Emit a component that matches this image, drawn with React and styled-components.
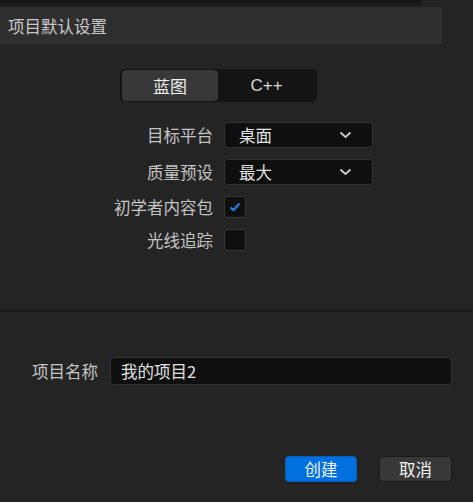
import React, { useState } from 'react';
import styled, { createGlobalStyle } from 'styled-components';

const GlobalStyle = createGlobalStyle`
  html, body {
    margin: 0;
    padding: 0;
    background: #242424;
    font-family: "Noto Sans CJK SC", "Noto Sans", sans-serif;
  }
`;

const Page = styled.div`
  width: 473px;
  height: 502px;
  display: flex;
  flex-direction: column;
  background: #242424;
  color: #c4c4c4;
  font-size: 16.5px;
  overflow: hidden;
`;

const TopShade = styled.div`
  width: 421px;
  height: 7px;
  background: linear-gradient(#141414, #1f1f1f);
`;

const TitleBar = styled.div`
  width: 442px;
  height: 37px;
  background: #2f2f2f;
  display: flex;
  align-items: center;
  padding-left: 8px;
  box-sizing: border-box;
  color: #c8c8c8;
`;

const Settings = styled.div`
  display: grid;
  grid-template-columns: 213px 149px;
  column-gap: 11px;
  row-gap: 11px;
  align-items: center;
  padding-top: 25px;
  height: 266px;
  align-content: start;
  box-sizing: border-box;
`;

const ToggleWrap = styled.div`
  grid-column: 1 / span 2;
  margin-left: 120px;
  margin-bottom: 9px;
  width: 197px;
  height: 33px;
  display: flex;
  padding: 1px 2px;
  box-sizing: border-box;
  background: #141414;
  border-radius: 5px;
`;

const ToggleItem = styled.div`
  display: flex;
  align-items: center;
  justify-content: center;
  border-radius: 4px;
  background: ${p => (p.active ? '#383838' : 'transparent')};
  color: ${p => (p.active ? '#f0f0f0' : '#d8d8d8')};
  font-size: 17px;
  font-family: ${p => (p.latin ? '"Liberation Sans", Arial, sans-serif' : 'inherit')};
  flex: ${p => (p.active ? '0 0 96px' : '1')};
`;

const Label = styled.div`
  text-align: right;
  color: #c4c4c4;
  line-height: 20px;
  white-space: nowrap;
`;

const Select = styled.div`
  height: 26px;
  display: flex;
  align-items: center;
  justify-content: space-between;
  padding: 0 20px 0 14px;
  box-sizing: border-box;
  background: #0f0f0f;
  border: 1px solid #333;
  border-radius: 4px;
  color: #e2e2e2;
`;

const Check = styled.div`
  width: 22px;
  height: 22px;
  box-sizing: border-box;
  background: #0f0f0f;
  border: 1px solid #363636;
  border-radius: 3px;
  display: flex;
  align-items: center;
  justify-content: center;
`;

const Divider = styled.div`
  height: 2px;
  background: #1b1b1b;
`;

const NameRow = styled.div`
  display: flex;
  align-items: center;
  gap: 12px;
  padding-left: 32px;
  margin-top: 45px;
`;

const NameInput = styled.div`
  width: 342px;
  height: 28px;
  box-sizing: border-box;
  display: flex;
  align-items: center;
  padding-left: 10px;
  background: #0f0f0f;
  border: 1px solid #333;
  border-radius: 4px;
  color: #e2e2e2;
`;

const Footer = styled.div`
  display: flex;
  justify-content: flex-end;
  gap: 22px;
  padding-right: 21px;
  margin-top: 71px;
`;

const Button = styled.button`
  width: ${p => (p.primary ? '72px' : '73px')};
  height: 26px;
  padding: 0;
  border-radius: 4px;
  border: 1px solid ${p => (p.primary ? '#0a5cb8' : '#1a1a1a')};
  background: ${p => (p.primary ? '#0070e0' : '#383838')};
  color: #f4f4f4;
  font-family: inherit;
  font-size: 16.5px;
  cursor: pointer;
`;

const Chevron = () => (
  <svg width="13" height="8" viewBox="0 0 13 8">
    <path d="M1.5 1.5 L6.5 6 L11.5 1.5" fill="none" stroke="#d0d0d0" strokeWidth="1.7" />
  </svg>
);

const Tick = () => (
  <svg width="12" height="10" viewBox="0 0 12 10">
    <path d="M1.5 5.5 L4.5 8 L10.5 1.5" fill="none" stroke="#1a84ea" strokeWidth="2.2" />
  </svg>
);

export default function App() {
  const [mode, setMode] = useState('bp');
  const [starter, setStarter] = useState(true);
  const [rt, setRt] = useState(false);

  return (
    <Page>
      <GlobalStyle />
      <TopShade />
      <TitleBar>项目默认设置</TitleBar>
      <Settings>
        <ToggleWrap>
          <ToggleItem active={mode === 'bp'} onClick={() => setMode('bp')}>蓝图</ToggleItem>
          <ToggleItem latin active={mode === 'cpp'} onClick={() => setMode('cpp')}>C++</ToggleItem>
        </ToggleWrap>
        <Label>目标平台</Label>
        <Select>桌面<Chevron /></Select>
        <Label>质量预设</Label>
        <Select>最大<Chevron /></Select>
        <Label>初学者内容包</Label>
        <Check onClick={() => setStarter(!starter)}>{starter && <Tick />}</Check>
        <Label>光线追踪</Label>
        <Check onClick={() => setRt(!rt)}>{rt && <Tick />}</Check>
      </Settings>
      <Divider />
      <NameRow>
        <Label>项目名称</Label>
        <NameInput>我的项目2</NameInput>
      </NameRow>
      <Footer>
        <Button primary>创建</Button>
        <Button>取消</Button>
      </Footer>
    </Page>
  );
}
